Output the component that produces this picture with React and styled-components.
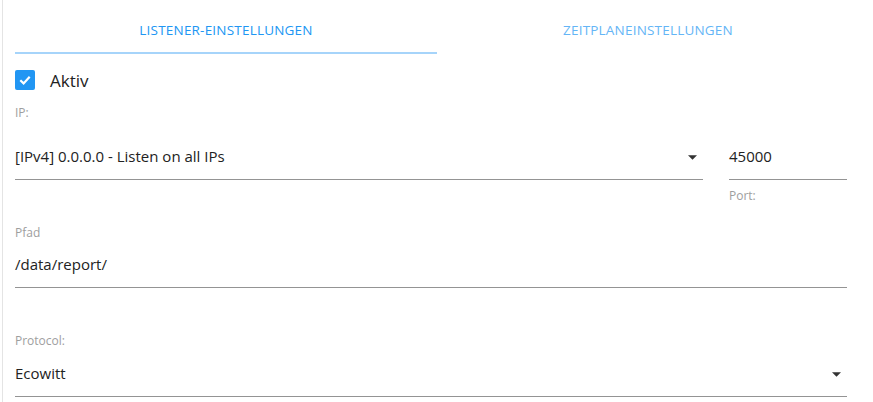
import styled, { createGlobalStyle } from "styled-components";

const GlobalStyle = createGlobalStyle`
  html, body {
    margin: 0;
    padding: 0;
    background: #ffffff;
  }
  body {
    font-family: "Open Sans", "Noto Sans", sans-serif;
    color: rgba(0, 0, 0, 0.87);
  }
`;

export default function App() {
  return (
    <>
      <GlobalStyle />
      <Page>
        <Tabs>
          <Tab $active>Listener-Einstellungen</Tab>
          <Tab>Zeitplaneinstellungen</Tab>
        </Tabs>
        <Form>
          <CheckRow>
            <CheckBox>
              <svg width="14" height="14" viewBox="0 0 14 14">
                <path
                  d="M2.3 7.2 L5.6 10.4 L11.7 3.8"
                  fill="none"
                  stroke="#fff"
                  strokeWidth="2.2"
                />
              </svg>
            </CheckBox>
            <CheckLabel>Aktiv</CheckLabel>
          </CheckRow>

          <IpGrid>
            <Label style={{ gridArea: "label" }}>IP:</Label>
            <InputBox style={{ gridArea: "select" }}>
              <Value>[IPv4] 0.0.0.0 - Listen on all IPs</Value>
              <Arrow />
            </InputBox>
            <InputBox style={{ gridArea: "port" }}>
              <Value>45000</Value>
            </InputBox>
            <Helper style={{ gridArea: "helper" }}>Port:</Helper>
          </IpGrid>

          <Field $top={21}>
            <Label>Pfad</Label>
            <InputBox $gap={8}>
              <Value>/data/report/</Value>
            </InputBox>
          </Field>

          <Field $top={45}>
            <Label>Protocol:</Label>
            <InputBox $gap={9}>
              <Value>Ecowitt</Value>
              <Arrow />
            </InputBox>
          </Field>
        </Form>
      </Page>
    </>
  );
}

function Arrow() {
  return (
    <ArrowIcon viewBox="0 0 10 5" width="10" height="5">
      <path d="M0 0 L10 0 L5 5 Z" fill="#333" />
    </ArrowIcon>
  );
}

const Page = styled.div`
  margin-left: 2px;
  border-left: 1px solid #e4e4e4;
  min-height: 402px;
  padding: 6px 14px 0 12px;
  box-sizing: border-box;
`;

const Tabs = styled.div`
  display: grid;
  grid-template-columns: 422px 422px;
`;

const Tab = styled.div`
  height: 48px;
  box-sizing: border-box;
  display: flex;
  align-items: center;
  justify-content: center;
  padding-top: 2px;
  text-transform: uppercase;
  font-size: 13.5px;
  letter-spacing: 0.2px;
  color: ${(p) => (p.$active ? "#2196f3" : "#64b5f6")};
  border-bottom: 2px solid ${(p) => (p.$active ? "#a6d4fa" : "transparent")};
`;

const Form = styled.div`
  width: 832px;
`;

const CheckRow = styled.div`
  display: flex;
  align-items: center;
  margin-top: 16px;
  height: 20px;
`;

const CheckBox = styled.div`
  width: 20px;
  height: 20px;
  border-radius: 2px;
  background: #2196f3;
  display: flex;
  align-items: center;
  justify-content: center;
`;

const CheckLabel = styled.span`
  margin-left: 15px;
  padding-top: 2px;
  font-size: 17px;
  line-height: 20px;
  color: #222;
`;

const Label = styled.div`
  font-size: 12px;
  line-height: 16px;
  color: #9e9e9e;
`;

const Helper = styled(Label)`
  margin-top: 8px;
`;

const IpGrid = styled.div`
  display: grid;
  grid-template-columns: 688px 118px;
  column-gap: 26px;
  grid-template-areas:
    "label ."
    "select port"
    ". helper";
  margin-top: 15px;

  & > ${() => InputBox} {
    margin-top: 20px;
  }
`;

const Field = styled.div`
  margin-top: ${(p) => p.$top}px;
`;

const InputBox = styled.div`
  height: 39px;
  box-sizing: border-box;
  border-bottom: 1px solid #949494;
  display: flex;
  align-items: flex-end;
  justify-content: space-between;
  padding-bottom: 13px;
  margin-top: ${(p) => (p.$gap ? p.$gap : 0)}px;
`;

const Value = styled.span`
  font-size: 15px;
  line-height: 20px;
  color: #222;
`;

const ArrowIcon = styled.svg`
  display: block;
  margin: 0 6px 6px 0;
  width: 9px;
  height: 5px;
`;
